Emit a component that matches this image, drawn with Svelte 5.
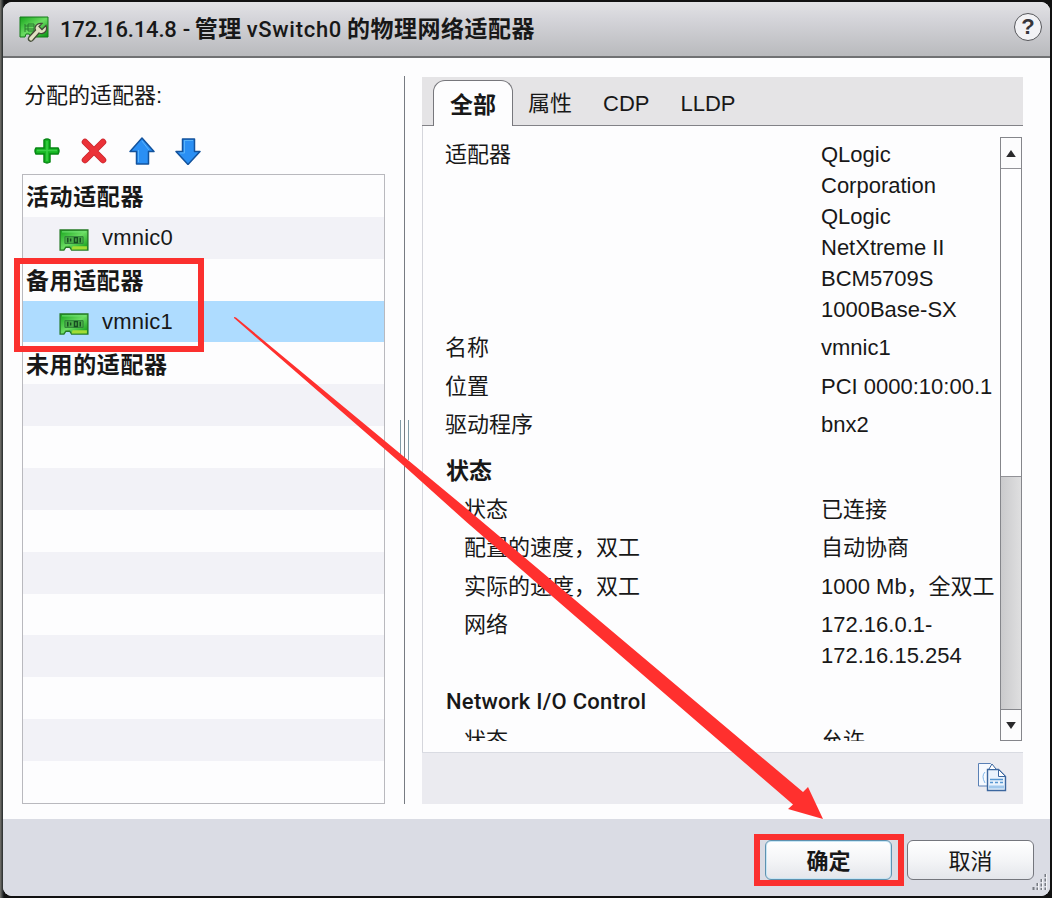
<script>
	const stripes = Array(10);
	const tabs = ["全部", "属性", "CDP", "LLDP"];
	let active = "全部";
	let selected = "vmnic1";

	const adapters = [
		{ title: "活动适配器", items: ["vmnic0"] },
		{ title: "备用适配器", items: ["vmnic1"] },
		{ title: "未用的适配器", items: [] },
	];

	const sections = [
		{
			rows: [
				["适配器", ["QLogic", "Corporation", "QLogic", "NetXtreme II", "BCM5709S", "1000Base-SX"]],
				["名称", ["vmnic1"]],
				["位置", ["PCI 0000:10:00.1"]],
				["驱动程序", ["bnx2"]],
			],
		},
		{
			title: "状态",
			rows: [
				["状态", ["已连接"]],
				["配置的速度，双工", ["自动协商"]],
				["实际的速度，双工", ["1000 Mb，全双工"]],
				["网络", ["172.16.0.1-", "172.16.15.254"]],
			],
		},
		{
			title: "Network I/O Control",
			latin: true,
			rows: [["状态", ["允许"]]],
		},
	];
</script>

<svelte:head>
	<title>vSwitch0</title>
</svelte:head>

<div class="screen">
	<div class="dialog">
		<header>
			<svg class="logo" width="30" height="28" viewBox="0 0 30 28">
				<defs>
					<linearGradient id="board" x1="0" y1="0" x2="1" y2="1">
						<stop offset="0" stop-color="#16a51c" />
						<stop offset=".5" stop-color="#6bdc62" />
						<stop offset="1" stop-color="#079510" />
					</linearGradient>
				</defs>
				<path d="M1 1h28v20h-17l-2-3H7l-1 3H1z" fill="url(#board)" stroke="#147b1b" />
				<path d="M6 8v8M9 8h6v7H9zM6 10h9M6 13h9" fill="none" stroke="#2a7a30" />
				<path d="M27 9.500l-4 4-3-3 3-3c-5-1-8 3-6.500 6.500L10 21c-2 3 2 6 4 3l6-7c5 2 9-2 7-7.500z" fill="#e0e0c2" stroke="#434c38" stroke-width="1.300" />
			</svg>
			<h1><span class="ip">172.16.14.8</span><span class="dash">-</span>管理<span class="vs">vSwitch0</span>的物理网络适配器</h1>
			<button class="help" aria-label="Help">?</button>
		</header>

		<main>
			<section class="left">
				<p class="label">分配的适配器:</p>
				<div class="tools">
					<svg width="28" height="28" viewBox="0 0 28 28">
						<path d="M11 3q3-2 6 0v8h8q2 3 0 6h-8v8q-3 2-6 0v-8H3q-2-3 0-6h8z" fill="#16b622" stroke="#078715" stroke-width="1.500" />
						<path d="M14 4v20M4 13.500h20" stroke="#3bd047" stroke-width="1.500" />
					</svg>
					<svg width="28" height="28" viewBox="0 0 28 28">
						<path d="M5 5l18 18M23 5L5 23" stroke="#c8252c" stroke-width="6.500" stroke-linecap="round" />
						<path d="M5 5l18 18M23 5L5 23" stroke="#eb3238" stroke-width="5" stroke-linecap="round" />
					</svg>
					<svg width="28" height="28" viewBox="0 0 28 28">
						<path d="M15 1l12 13.500h-5.500V27h-12V14.500H3z" fill="#2a8ff4" stroke="#13539d" stroke-width="1.500" stroke-linejoin="round" />
						<path d="M15 4l7 9M11.500 13v12" fill="none" stroke="#58b3fa" />
					</svg>
					<svg width="28" height="28" viewBox="0 0 28 28">
						<path d="M14 27.500l12-13h-5.500V2h-12v12.500H2z" fill="#2a8ff4" stroke="#13539d" stroke-width="1.500" stroke-linejoin="round" />
						<path d="M10.500 4v12H6M10 3.500h9" fill="none" stroke="#58b3fa" />
					</svg>
				</div>
				<div class="list">
					{#each adapters as group}
						<div class="line group">{group.title}</div>
						{#each group.items as nic}
							<button class="line nic" class:selected={nic === selected} on:click={() => (selected = nic)}>
								<svg width="30" height="23" viewBox="0 0 31 24">
									<path d="M1 1h29v21H13l-2-3H7l-2 3H1z" fill="url(#board)" stroke="#257925" stroke-width="1.400" />
									<path d="M13 21.500h16V18H14z" fill="#a3dc35" />
									<path d="M6 8h19v7H6z" fill="#4aae48" stroke="#2f7d38" />
									<path d="M9 9v5M12 10v3M16 9h3v5h-3zM22 9v5" fill="none" stroke="#174d22" stroke-width="1.500" />
									<path d="M3 3h25" stroke="#78e67a" />
								</svg>
								<span>{nic}</span>
							</button>
						{/each}
					{/each}
					{#each stripes as _}
						<div class="line"></div>
					{/each}
				</div>
			</section>

			<div class="splitter"><div class="grip"></div></div>

			<section class="right">
				<nav>
					{#each tabs as tab}
						<button class="tab" class:active={tab === active} on:click={() => (active = tab)}>{tab}</button>
					{/each}
				</nav>
				<div class="body">
					<div class="details">
						{#each sections as section}
							{#if section.title}
								<h2 class:latin={section.latin}>{section.title}</h2>
							{/if}
							{#each section.rows as [name, lines]}
								<div class="row" class:indent={section.title}>
									<span class="name">{name}</span>
									<span class="value">
										{#each lines as line}
											<span>{line}</span>
										{/each}
									</span>
								</div>
							{/each}
						{/each}
					</div>
					<div class="scrollbar">
						<div class="arrow"><svg width="10" height="7" viewBox="0 0 11 8"><path d="M5.500 0L11 8H0z" /></svg></div>
						<div class="thumb"></div>
						<div class="track"></div>
						<div class="arrow"><svg width="10" height="7" viewBox="0 0 11 8"><path d="M0 0h11L5.500 8z" /></svg></div>
					</div>
				</div>
				<div class="status">
					<svg width="31" height="30" viewBox="0 0 31 30">
						<path d="M1.500 1.500h12l5 5V24h-17z" fill="#f7faff" stroke="#5a80b5" />
						<path d="M8 10q-4 4 0 11" fill="none" stroke="#82b7e9" />
						<path d="M10.500 7.500h11l7 7v14h-18z" fill="#eaf3fd" stroke="#3c679f" stroke-width="1.400" />
						<path d="M12 7l3-5 4 5M21.500 7.500v7h7z" fill="#fff" stroke="#3c679f" />
						<path d="M13 17.500h13M13 20.500h3M18 20.500h3M23 20.500h3" stroke="#5797d1" stroke-width="1.500" />
						<path d="M12 25h15" stroke="#a1c8ec" stroke-width="3" />
					</svg>
				</div>
			</section>
		</main>

		<footer>
			<button class="action primary">确定</button>
			<button class="action">取消</button>
		</footer>

		<svg class="resize" width="18" height="18" viewBox="0 0 18 18">
			<path d="M16.500 1v16M12.500 6v11M8.500 10v7M4.500 14v3" stroke="#777b82" stroke-width="2" stroke-dasharray="3 1.500" />
			<path d="M17.500 1v16M13.500 6v11M9.500 10v7" stroke="#f3f4f7" />
		</svg>
	</div>

	<div class="mark mark-nic"></div>
	<div class="mark mark-ok"></div>
	<svg class="pointer" width="1052" height="898" viewBox="0 0 1052 898">
		<path d="M234 317L236 317.500L467 509L803 792L808 787L823 819L788 809L793 804.500L650 681L467 522.500L403 465L234 318Z" fill="#ff302e" />
	</svg>
</div>

<style>
	:global(body) {
		margin: 0;
	}
	.screen {
		position: relative;
		box-sizing: border-box;
		width: 1052px;
		height: 898px;
		padding: 2px 2px 2px 3px;
		overflow: hidden;
		background: linear-gradient(90deg, #77756f 0, #252a2b 3px, #111 4px);
		font-family: "Liberation Sans", "Noto Sans CJK SC", sans-serif;
		font-size: 22px;
		letter-spacing: 0;
		color: #181818;
	}
	button {
		font: inherit;
		letter-spacing: inherit;
		color: inherit;
		padding: 0;
		margin: 0;
		border: 0;
		background: none;
	}
	.dialog {
		position: relative;
		display: flex;
		flex-direction: column;
		height: 894px;
		border-radius: 9px;
		overflow: hidden;
		background: #fdfdfe;
	}
	header {
		box-sizing: border-box;
		display: flex;
		align-items: center;
		height: 56px;
		padding: 0 8px 5px 16px;
		border-bottom: 2px solid #707173;
		background: linear-gradient(#e2e2e5, #d5d5da 30%, #b9babd);
	}
	.logo {
		margin-top: 6px;
	}
	h1 {
		flex: 1;
		margin: 0 0 0 11px;
		font-size: 23px;
		font-weight: bold;
		letter-spacing: 0.5px;
		white-space: nowrap;
	}
	.ip,
	.dash,
	.vs {
		font: 500 22px Roboto, sans-serif;
	}
	.ip {
		letter-spacing: -0.15px;
	}
	.dash {
		margin: 0 4px 0 6px;
	}
	.vs {
		margin: 0 5px;
		letter-spacing: 0.7px;
	}
	.help {
		box-sizing: border-box;
		width: 28px;
		height: 28px;
		border: 1px solid #55565a;
		border-radius: 50%;
		background: #f2f2f5;
		font-size: 22px;
		font-weight: bold;
		line-height: 26px;
		color: #36363a;
	}
	main {
		display: flex;
		height: 761px;
	}
	.left {
		width: 363px;
		padding-left: 19px;
	}
	.label {
		margin: 22px 0 0 2px;
		line-height: 31px;
	}
	.tools {
		display: flex;
		gap: 19px;
		margin: 26px 0 9px 11px;
	}
	.tools svg {
		display: block;
	}
	.list {
		box-sizing: border-box;
		height: 630px;
		border: 1px solid #b9b9be;
		overflow: hidden;
	}
	.line {
		box-sizing: border-box;
		display: flex;
		align-items: center;
		width: 100%;
		height: 41.87px;
	}
	.line:nth-child(even) {
		background: #f2f2f7;
	}
	.group {
		padding: 0 0 1px 3px;
		font-size: 23px;
		font-weight: bold;
		letter-spacing: 0.6px;
	}
	.nic {
		gap: 13px;
		padding-left: 36px;
		letter-spacing: 0.2px;
	}
	.nic svg {
		margin-top: 6px;
	}
	.line.selected {
		background: #aedcff;
	}
	.splitter {
		display: flex;
		justify-content: center;
		align-items: center;
		width: 37px;
		height: 728px;
		margin-top: 18px;
		background: linear-gradient(#777b82, #777b82) 19px 0 / 1px 100% no-repeat;
	}
	.grip {
		width: 7px;
		height: 40px;
		border: solid #819ba7;
		border-width: 0 1px;
		margin-left: 2px;
	}
	.right {
		display: flex;
		flex-direction: column;
		width: 601px;
		height: 727px;
		margin-top: 19px;
	}
	nav {
		box-sizing: border-box;
		display: flex;
		height: 49px;
		padding: 3px 0 0 11px;
		border-bottom: 1px solid #828287;
		background: #e5e4e6;
	}
	.tab {
		height: 45px;
		padding: 1px 16px 0 15px;
		line-height: 43px;
	}
	.tab.active {
		box-sizing: border-box;
		width: 80px;
		height: 46px;
		padding: 3px 0 0;
		border: 1px solid #77777c;
		border-bottom: 0;
		border-radius: 12px 12px 0 0;
		background: #fdfdfe;
		font-size: 23px;
		font-weight: bold;
	}
	.body {
		box-sizing: border-box;
		display: flex;
		height: 626px;
		padding: 11px 1px 11px 0;
		border-left: 1px solid #d5d6dc;
	}
	.details {
		flex: 1;
		height: 604px;
		overflow: hidden;
		white-space: nowrap;
	}
	.row {
		display: flex;
		padding: 3.6px 0 3.7px 22px;
		line-height: 31px;
	}
	.row:first-child {
		padding-top: 2px;
	}
	.name {
		width: 376px;
	}
	.value {
		display: flex;
		flex-direction: column;
	}
	.indent {
		padding-left: 41px;
	}
	.indent .name {
		width: 357px;
	}
	h2 {
		margin: 8.7px 0 0 23px;
		font-size: 23px;
		line-height: 38.3px;
	}
	h2.latin {
		font: 500 22px/38.3px Roboto, sans-serif;
		letter-spacing: 0.25px;
	}
	.scrollbar {
		box-sizing: border-box;
		display: flex;
		flex-direction: column;
		width: 22px;
		height: 604px;
		border: 1px solid #85868b;
	}
	.arrow {
		display: flex;
		justify-content: center;
		align-items: center;
		height: 30px;
		background: #fcfcfd;
	}
	.arrow svg {
		fill: #29292b;
	}
	.thumb {
		height: 307px;
		border: solid #929297;
		border-width: 1px 0;
		background: #fefeff;
	}
	.track {
		flex: 1;
		border-bottom: 1px solid #85868b;
		background: linear-gradient(90deg, #cacacc, #dfdfe0);
	}
	.status {
		box-sizing: border-box;
		display: flex;
		justify-content: flex-end;
		align-items: center;
		height: 52px;
		padding: 0 15px 3px 0;
		border-top: 1px solid #d9dbe2;
		background: #ebebf0;
	}
	footer {
		box-sizing: border-box;
		display: flex;
		justify-content: flex-end;
		align-items: flex-start;
		gap: 15px;
		flex: 1;
		padding: 21px 16px 0 0;
		background: #dadce4;
	}
	.action {
		box-sizing: border-box;
		width: 127px;
		height: 40px;
		border: 1px solid #74767d;
		border-radius: 6px;
		background: linear-gradient(#fff, #f4f5f7 50%, #e4e6eb);
		line-height: 41px;
	}
	.primary {
		border-color: #5e92b0;
		box-shadow: inset 0 0 0 1px #c8e6f5;
		font-weight: bold;
	}
	.resize {
		position: absolute;
		right: 3px;
		bottom: 5px;
	}
	.mark {
		position: absolute;
		box-sizing: border-box;
		border: 6px solid #fb302e;
	}
	.mark-nic {
		left: 14px;
		top: 258px;
		width: 190px;
		height: 94px;
	}
	.mark-ok {
		left: 754px;
		top: 834px;
		width: 150px;
		height: 52px;
	}
	.pointer {
		position: absolute;
		left: 0;
		top: 0;
		pointer-events: none;
	}
</style>
